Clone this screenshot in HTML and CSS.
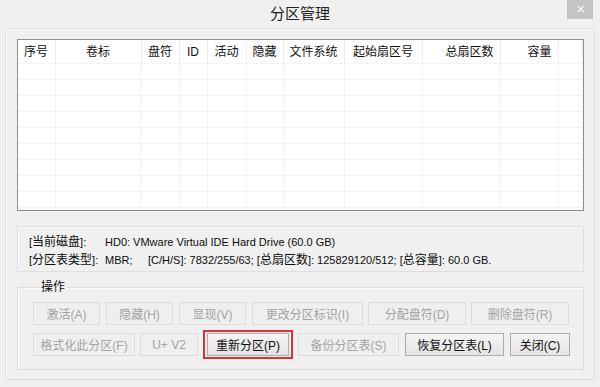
FILE: index.html
```html
<!DOCTYPE html>
<html lang="zh-CN">
<head>
    <meta charset="UTF-8">
    <title>分区管理</title>
    <link rel="stylesheet" href="styles.css">
</head>
<body>
<div class="win">
    <div class="titlebar">
        <span class="title">分区管理</span>
        <span class="close">&#x2715;</span>
    </div>
    <div class="panel">
        <div class="grid">
            <table>
                <colgroup>
                    <col class="c1"><col class="c2"><col class="c3"><col class="c4"><col class="c5"><col class="c6">
                    <col class="c7"><col class="c8"><col class="c9"><col class="c10"><col>
                </colgroup>
                <thead>
                <tr>
                    <th class="l">序号</th>
                    <th>卷标</th>
                    <th>盘符</th>
                    <th>ID</th>
                    <th>活动</th>
                    <th>隐藏</th>
                    <th>文件系统</th>
                    <th>起始扇区号</th>
                    <th class="r">总扇区数</th>
                    <th class="r">容量</th>
                    <th></th>
                </tr>
                </thead>
                <tbody>
                <tr><td></td><td></td><td></td><td></td><td></td><td></td><td></td><td></td><td></td><td></td><td></td></tr>
                <tr><td></td><td></td><td></td><td></td><td></td><td></td><td></td><td></td><td></td><td></td><td></td></tr>
                <tr><td></td><td></td><td></td><td></td><td></td><td></td><td></td><td></td><td></td><td></td><td></td></tr>
                <tr><td></td><td></td><td></td><td></td><td></td><td></td><td></td><td></td><td></td><td></td><td></td></tr>
                <tr><td></td><td></td><td></td><td></td><td></td><td></td><td></td><td></td><td></td><td></td><td></td></tr>
                <tr><td></td><td></td><td></td><td></td><td></td><td></td><td></td><td></td><td></td><td></td><td></td></tr>
                <tr><td></td><td></td><td></td><td></td><td></td><td></td><td></td><td></td><td></td><td></td><td></td></tr>
                <tr><td></td><td></td><td></td><td></td><td></td><td></td><td></td><td></td><td></td><td></td><td></td></tr>
                <tr><td></td><td></td><td></td><td></td><td></td><td></td><td></td><td></td><td></td><td></td><td></td></tr>
                </tbody>
            </table>
        </div>

        <div class="info">
            <span>[<span class="z">当前磁盘</span>]:</span>
            <span>HD0: VMware Virtual IDE Hard Drive (60.0 GB)</span>
            <span>[<span class="z">分区表类型</span>]:</span>
            <span><span class="mbr">MBR;</span>[C/H/S]: 7832/255/63; [<span class="z">总扇区数</span>]: 125829120/512; [<span class="z">总容量</span>]: 60.0 GB.</span>
        </div>

        <fieldset class="ops">
            <legend>操作</legend>
            <div class="row">
                <button class="btn w67" disabled>激活(A)</button>
                <button class="btn w67" disabled>隐藏(H)</button>
                <button class="btn w67" disabled>显现(V)</button>
                <button class="btn w111" disabled>更改分区标识(I)</button>
                <button class="btn w98" disabled>分配盘符(D)</button>
                <button class="btn w98" disabled>删除盘符(R)</button>
            </div>
            <div class="row">
                <button class="btn w102" disabled>格式化此分区(F)</button>
                <button class="btn w58" disabled>U+ V2</button>
                <span class="mark"><button class="btn on w82">重新分区(P)</button></span>
                <button class="btn w101" disabled>备份分区表(S)</button>
                <button class="btn on w99">恢复分区表(L)</button>
                <button class="btn on w60">关闭(C)</button>
            </div>
        </fieldset>
    </div>
</div>
</body>
</html>
```

FILE: styles.css
```css
body, div, table, fieldset, legend {
    margin: 0;
    padding: 0;
}

body {
    background: #f0f0f0;
    font: 12px/16px "Liberation Sans", "Noto Sans CJK SC", sans-serif;
    color: #1a1a1a;
}

.win {
    width: 600px;
    height: 387px;
    overflow: hidden;
}

.titlebar {
    position: relative;
    height: 28px;
    display: flex;
    justify-content: center;
    align-items: center;
}

.title {
    font-size: 15px;
    color: #222;
}

.close {
    position: absolute;
    top: 0;
    right: 7px;
    width: 26px;
    height: 19px;
    background: #c4c4c4;
    color: #fff;
    font-size: 11px;
    line-height: 19px;
    text-align: center;
}

.panel {
    margin: 0 5px;
    height: 352px;
    box-sizing: border-box;
    border: 1px solid #dedede;
    border-radius: 2px;
    box-shadow: inset 1px 1px 0 #fafafa;
    padding: 10px 10px 0 11px;
}

.grid {
    height: 172px;
    box-sizing: border-box;
    border: 1px solid #8f8f8f;
    background: #fff;
    overflow: hidden;
}

.grid table {
    width: 100%;
    border-collapse: collapse;
    table-layout: fixed;
}

.c1 { width: 37px; }
.c2 { width: 86px; }
.c3 { width: 38px; }
.c4 { width: 28px; }
.c5 { width: 39px; }
.c6 { width: 37px; }
.c7 { width: 61px; }
.c8 { width: 78px; }
.c9 { width: 78px; }
.c10 { width: 58px; }

.grid th {
    height: 23px;
    font-weight: normal;
    text-align: center;
    padding: 0;
    border-right: 1px solid #ececec;
    border-bottom: 1px solid #f4f4f4;
    color: #111;
    white-space: nowrap;
}

.grid th.l {
    text-align: left;
    padding-left: 6px;
}

.grid th.r {
    text-align: right;
    padding-right: 6px;
}

.grid td {
    height: 15px;
    padding: 0;
    border-right: 1px solid #f2f2f2;
    border-bottom: 1px solid #f2f2f2;
}

.info {
    margin-top: 15px;
    height: 46px;
    box-sizing: border-box;
    border: 1px solid #dedede;
    box-shadow: inset 1px 1px 0 #fafafa;
    padding: 9px 0 0 11px;
    display: grid;
    grid-template-columns: 76px 1fr;
    line-height: 13px;
    font-size: 11px;
    color: #0d0d0d;
    white-space: nowrap;
}

.info .z {
    font-size: 12px;
}

.mbr {
    display: inline-block;
    width: 43px;
}

.ops {
    margin-top: 7px;
    border: 1px solid #dedede;
    box-shadow: inset 1px 1px 0 #fafafa;
    padding: 6px 0 13px 15px;
    min-width: 0;
}

.ops legend {
    margin-left: 7px;
    padding: 0 1px;
    line-height: 17px;
    color: #111;
}

.row {
    display: flex;
    align-items: center;
    gap: 5px;
    height: 23px;
}

.row + .row {
    margin-top: 8px;
}

.btn {
    height: 23px;
    padding: 0;
    font: 12px "Liberation Sans", "Noto Sans CJK SC", sans-serif;
    border: 1px solid #dcdcdc;
    background: #efefef;
    color: #a3a3a3;
    white-space: nowrap;
}

.btn.on {
    border-color: #adadad;
    background: linear-gradient(#f5f5f5, #e4e4e4);
    color: #111;
}

.mark {
    display: flex;
    padding: 1px 2px;
    border: 2px solid #e0322c;
}

.w58 { width: 58px; }
.w60 { width: 60px; }
.w67 { width: 67px; margin-right: 1px; }
.w82 { width: 82px; }
.w98 { width: 98px; }
.w99 { width: 99px; margin-right: 1px; }
.w101 { width: 101px; margin-right: 1px; }
.w102 { width: 102px; }
.w111 { width: 111px; }
```
